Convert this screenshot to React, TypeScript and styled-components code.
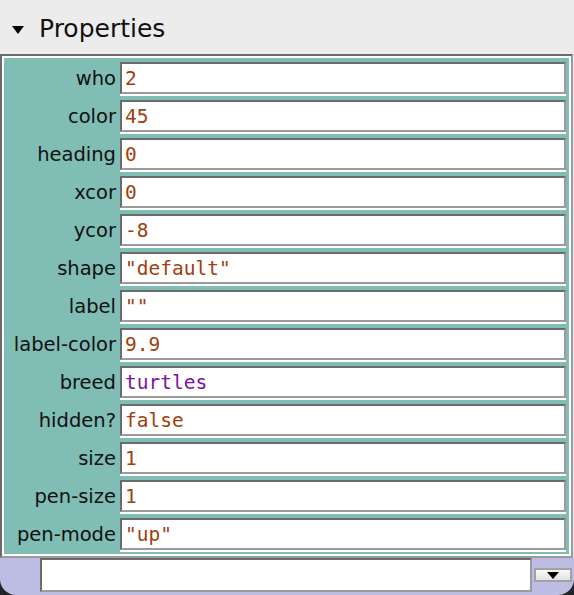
import React from "react";
import styled, { createGlobalStyle } from "styled-components";

const Global = createGlobalStyle`
  html, body { margin: 0; padding: 0; background: #ececec; }
  body { width: 574px; height: 595px; overflow: hidden; }
`;

const Page = styled.div`
  width: 574px;
  height: 595px;
  display: flex;
  flex-direction: column;
  background: #ececec;
`;

const Header = styled.div`
  height: 54px;
  display: flex;
  align-items: center;
  gap: 15px;
  padding-left: 12px;
  box-sizing: border-box;
  font-family: "DejaVu Sans", sans-serif;
  font-size: 25px;
  color: #111;
  padding-top: 2px;
`;

const Caret = styled.span`
  width: 0;
  height: 0;
  border-left: 6.5px solid transparent;
  border-right: 6.5px solid transparent;
  border-top: 8px solid #000;
  margin-top: 3px;
`;

const Outer = styled.div`
  width: 573px;
  box-sizing: border-box;
  border: 2px solid;
  border-color: #6b6b6b #9b9b9b #9b9b9b #6b6b6b;
`;

const Panel = styled.div`
  border: 2px solid #fff;
  background: #80bdb5;
  padding: 4px 3px 2px 0;
  display: flex;
  flex-direction: column;
  gap: 4px;
`;

const Row = styled.div`
  display: flex;
  align-items: flex-start;
`;

const Label = styled.div`
  width: 116px;
  box-sizing: border-box;
  padding-right: 4px;
  height: 32px;
  display: flex;
  align-items: center;
  justify-content: flex-end;
  font-family: "DejaVu Sans", sans-serif;
  font-size: 19.5px;
  color: #111;
  white-space: nowrap;
`;

const FieldWrap = styled.div`
  flex: 1;
  border-bottom: 2px solid #fff;
`;

const Field = styled.div<{ $kind?: "breed" | "value" }>`
  height: 32px;
  box-sizing: border-box;
  border: 2px solid;
  border-color: #6b6b6b #9b9b9b #9b9b9b #6b6b6b;
  background: #fff;
  display: flex;
  align-items: center;
  padding-left: 3px;
  font-family: "DejaVu Sans Mono", monospace;
  font-size: 19.5px;
  color: ${(p) => (p.$kind === "breed" ? "#7a14a2" : "#a0400c")};
  white-space: pre;
`;

const BottomBar = styled.div`
  flex: 1;
  background: #23232b;
  display: flex;
`;

const Lavender = styled.div`
  flex: 1;
  background: #bdbde4;
  border-radius: 0 0 16px 16px;
  display: flex;
  align-items: flex-start;
  padding: 0 2px 0 40px;
`;

const CommandInput = styled.div`
  flex: 1;
  height: 34px;
  box-sizing: border-box;
  border: 2px solid;
  border-color: #6b6b6b #9b9b9b #9b9b9b #6b6b6b;
  background: #fff;
`;

const DropButton = styled.div`
  width: 38px;
  height: 14px;
  margin: 10px 0 0 2px;
  box-sizing: border-box;
  border: 2px solid #a2a2a2;
  background: linear-gradient(#fafafa, #e2e2e2);
  display: flex;
  align-items: center;
  justify-content: center;
`;

const DropTri = styled.span`
  width: 0;
  height: 0;
  border-left: 6px solid transparent;
  border-right: 6px solid transparent;
  border-top: 7px solid #000;
`;

const rows: { label: string; value: string; kind?: "breed" }[] = [
  { label: "who", value: "2" },
  { label: "color", value: "45" },
  { label: "heading", value: "0" },
  { label: "xcor", value: "0" },
  { label: "ycor", value: "-8" },
  { label: "shape", value: '"default"' },
  { label: "label", value: '""' },
  { label: "label-color", value: "9.9" },
  { label: "breed", value: "turtles", kind: "breed" },
  { label: "hidden?", value: "false" },
  { label: "size", value: "1" },
  { label: "pen-size", value: "1" },
  { label: "pen-mode", value: '"up"' },
];

export default function App() {
  return (
    <Page>
      <Global />
      <Header>
        <Caret />
        <span>Properties</span>
      </Header>
      <Outer>
        <Panel>
          {rows.map((r) => (
            <Row key={r.label}>
              <Label>{r.label}</Label>
              <FieldWrap>
                <Field $kind={r.kind}>{r.value}</Field>
              </FieldWrap>
            </Row>
          ))}
        </Panel>
      </Outer>
      <BottomBar>
        <Lavender>
          <CommandInput />
          <DropButton>
            <DropTri />
          </DropButton>
        </Lavender>
      </BottomBar>
    </Page>
  );
}
